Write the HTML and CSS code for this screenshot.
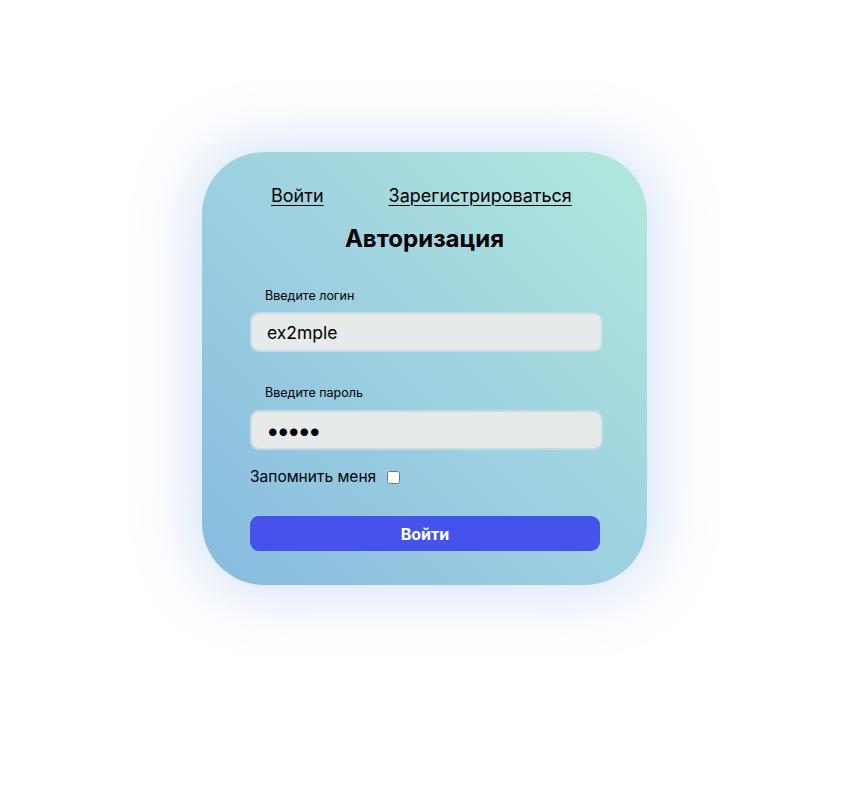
FILE: index.html
```html
<!DOCTYPE html>
<html lang="ru">
<head>
<meta charset="utf-8">
<title>Авторизация</title>
<link rel="stylesheet" href="styles.css">
</head>
<body>
<div class="page">
  <form class="card">
    <nav class="tabs">
      <a href="#" class="tab">Войти</a>
      <a href="#" class="tab">Зарегистрироваться</a>
    </nav>
    <h1 class="title">Авторизация</h1>
    <label class="label" for="login">Введите логин</label>
    <input class="field" id="login" type="text" value="ex2mple">
    <label class="label label-second" for="pass">Введите пароль</label>
    <input class="field field-pass" id="pass" type="password" value="12345">
    <div class="remember">
      <span>Запомнить меня</span>
      <input type="checkbox" class="check">
    </div>
    <button type="button" class="submit">Войти</button>
  </form>
</div>
</body>
</html>
```

FILE: styles.css
```css
html, body {
  margin: 0;
  padding: 0;
  background: #ffffff;
}

body {
  font-family: Inter, "Noto Sans", sans-serif;
  color: #000;
  min-height: 805px;
}

.page {
  width: 849px;
  min-height: 805px;
  box-sizing: border-box;
  display: flex;
  justify-content: center;
  align-items: flex-start;
  padding-top: 152px;
}

.card {
  box-sizing: border-box;
  width: 445px;
  height: 433px;
  border-radius: 62px;
  background: linear-gradient(45deg, #86bbe0 0%, #9ed1e0 50%, #b2e9dc 100%);
  box-shadow: 0 0 60px 12px rgba(100, 150, 228, 0.26);
  padding: 32px 44px 0 48px;
  display: flex;
  flex-direction: column;
}

.tabs {
  display: flex;
  gap: 65px;
  padding-left: 21px;
  line-height: 24px;
}

.tab {
  color: #000;
  font-size: 18px;
  text-decoration: underline;
  text-underline-offset: 3px;
  text-decoration-thickness: 1px;
}

.title {
  margin: 17px 0 0;
  text-align: center;
  font-size: 24px;
  font-weight: 700;
  line-height: 28px;
  padding-right: 4px;
}

.label {
  margin: 35px 0 0 15px;
  font-size: 12.5px;
  line-height: 16px;
}

.label-second {
  margin-top: 33px;
}

.field {
  box-sizing: border-box;
  margin-top: 8px;
  width: 353px;
  height: 40px;
  border: 2px solid #c6dbe2;
  border-radius: 9px;
  background: #e6eae9;
  padding: 0 15px;
  font-family: Inter, "Noto Sans", sans-serif;
  font-size: 17.5px;
  color: #000;
  outline: none;
}

.field-pass {
  margin-top: 9px;
  font-size: 24px;
  letter-spacing: -3px;
  padding-left: 14px;
}

.remember {
  margin-top: 17px;
  display: flex;
  align-items: center;
  gap: 11px;
  font-size: 15.5px;
  line-height: 20px;
}

.check {
  margin: 0;
  width: 13px;
  height: 13px;
}

.submit {
  margin-top: 29px;
  width: 350px;
  height: 35px;
  border: none;
  border-radius: 9px;
  background: #4553ec;
  color: #fff;
  font-family: Inter, "Noto Sans", sans-serif;
  font-size: 16px;
  font-weight: 700;
}
```
